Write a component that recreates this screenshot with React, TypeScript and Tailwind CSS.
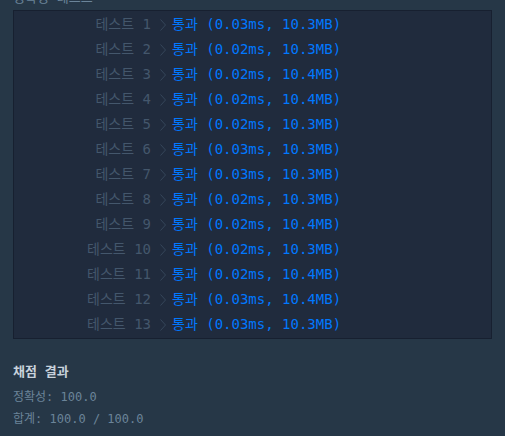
import React from "react";

const results = [
  ["0.03ms", "10.3MB"],
  ["0.02ms", "10.3MB"],
  ["0.02ms", "10.4MB"],
  ["0.02ms", "10.4MB"],
  ["0.02ms", "10.3MB"],
  ["0.03ms", "10.3MB"],
  ["0.03ms", "10.3MB"],
  ["0.02ms", "10.3MB"],
  ["0.02ms", "10.4MB"],
  ["0.02ms", "10.3MB"],
  ["0.02ms", "10.4MB"],
  ["0.03ms", "10.4MB"],
  ["0.03ms", "10.3MB"],
];

const mono = "font-['DejaVu_Sans_Mono','Noto_Sans_CJK_KR',monospace]";

function Chevron() {
  return (
    <svg width="8" height="14" viewBox="0 0 8 14" className="shrink-0" aria-hidden>
      <path d="M1.5 1.5 L6.5 7 L1.5 12.5" fill="none" stroke="#35465a" strokeWidth="1" />
    </svg>
  );
}

export default function App() {
  return (
    <div className={`h-[436px] w-[505px] overflow-hidden bg-[#263747] ${mono}`}>
      <div className="-mt-[12px] px-[13px] text-[13px] leading-[20px] text-[#6b8499]">정확성 테스트</div>

      <div className="mx-[13px] mt-[2px] border border-[#172030] bg-[#202b3d] py-[1px]">
        {results.map(([t, m], i) => (
          <div key={i} className="flex h-[25px] items-center text-[14px]">
            <span className="w-[137px] text-right text-[#44576c]">테스트 {i + 1}</span>
            <span className="ml-[8px] mr-[5px] flex items-center">
              <Chevron />
            </span>
            <span className="text-[#0078ff]">
              통과 ({t}, {m})
            </span>
          </div>
        ))}
      </div>

      <div className="px-[13px] pt-[22px]">
        <div className="text-[13px] font-bold leading-[22px] text-[#c8d2dc]">채점 결과</div>
        <div className="mt-[3px] text-[12px] leading-[22px] text-[#6b8499]">정확성: 100.0</div>
        <div className="text-[12px] leading-[22px] text-[#6b8499]">합계: 100.0 / 100.0</div>
      </div>
    </div>
  );
}
